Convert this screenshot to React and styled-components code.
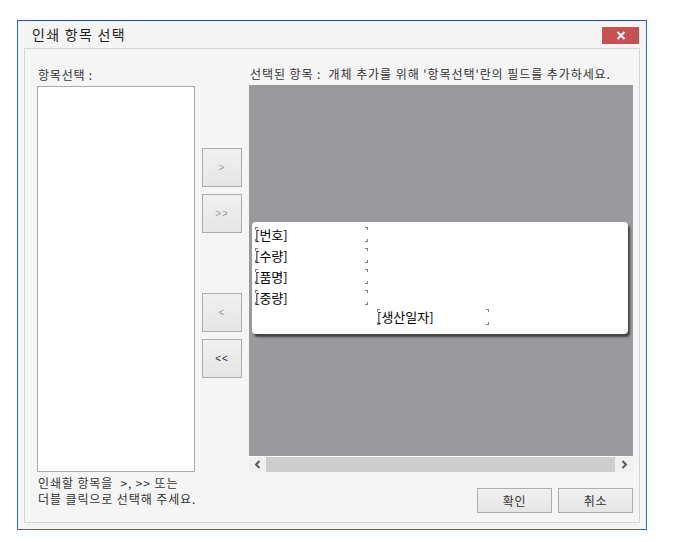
import React from "react";
import styled, { createGlobalStyle } from "styled-components";

const Global = createGlobalStyle`
  html, body { margin: 0; padding: 0; background: #ffffff; }
  body { font-family: "Noto Sans CJK KR", "Noto Sans", sans-serif; }
  * { box-sizing: border-box; }
`;

const Window = styled.div`
  margin: 20px 0 0 17px;
  width: 630px;
  height: 510px;
  border: 1px solid #1a72c6;
  border-top-color: #2a55a0;
  background: #f4f4f4;
  display: flex;
  flex-direction: column;
`;

const TitleBar = styled.div`
  height: 27px;
  display: flex;
  align-items: flex-start;
  justify-content: space-between;
  padding-left: 14px;
`;

const Title = styled.div`
  font-size: 14px;
  line-height: 16px;
  letter-spacing: 1.3px;
  margin-top: 5px;
  color: #1e1e1e;
`;

const CloseButton = styled.div`
  width: 37px;
  height: 17px;
  margin: 6px 7px 0 0;
  background: #c75050;
  display: flex;
  align-items: center;
  justify-content: center;
`;

const Panel = styled.div`
  margin: 0 6px;
  height: 475px;
  border: 1px solid #d4d4d4;
  background: #f5f5f5;
  display: grid;
  grid-template-columns: 158px 7px 40px 7px 384px;
  grid-template-rows: 37px 386px 50px;
  padding: 0 6px 0 12px;
`;

const Label = styled.div`
  align-self: end;
  font-size: 12px;
  line-height: 16px;
  letter-spacing: ${(p) => p.$ls || 0.8}px;
  margin-bottom: ${(p) => p.$mb || 3}px;
  margin-left: ${(p) => p.$ml || 0}px;
  color: #333333;
  white-space: pre;
  grid-column: ${(p) => p.$col};
`;

const ListBox = styled.div`
  grid-column: 1;
  grid-row: 2;
  background: #ffffff;
  border: 1px solid #ababab;
`;

const ButtonColumn = styled.div`
  grid-column: 3;
  grid-row: 2;
  display: flex;
  flex-direction: column;
  padding-top: 62px;
`;

const MoveButton = styled.div`
  width: 40px;
  height: 39px;
  margin-top: ${(p) => p.$mt || 0}px;
  border: 1px solid #adadad;
  background: linear-gradient(#f0f0f0, #e5e5e5);
  display: flex;
  align-items: center;
  justify-content: center;
  font-family: "Liberation Sans", sans-serif;
  font-size: 10px;
  letter-spacing: 1px;
  color: ${(p) => (p.$enabled ? "#2a2a3a" : "#9a9a9a")};
`;

const RightColumn = styled.div`
  grid-column: 5;
  grid-row: 2;
  margin-top: -1px;
  height: 387px;
  display: flex;
  flex-direction: column;
`;

const Canvas = styled.div`
  height: 371px;
  background: #9a9a9e;
  padding: 137px 0 0 3px;
`;

const Card = styled.div`
  width: 376px;
  height: 112px;
  background: #ffffff;
  border-radius: 4px;
  box-shadow: 2px 3px 2px rgba(40, 40, 40, 0.75);
  padding: 5px 3px 0 3px;
  display: flex;
  flex-direction: column;
  gap: 6px;
`;

const corner = "linear-gradient(#808080, #808080)";

const Field = styled.div`
  width: ${(p) => p.$w || 113}px;
  height: ${(p) => p.$h || 15}px;
  margin-left: ${(p) => p.$ml || 0}px;
  margin-top: ${(p) => p.$mt || 0}px;
  font-size: 13px;
  line-height: ${(p) => p.$h || 15}px;
  color: #000000;
  white-space: nowrap;
  background:
    ${corner} left top / 3px 1px no-repeat,
    ${corner} left top / 1px 3px no-repeat,
    ${corner} right top / 3px 1px no-repeat,
    ${corner} right top / 1px 3px no-repeat,
    ${corner} left bottom / 3px 1px no-repeat,
    ${corner} left bottom / 1px 3px no-repeat,
    ${corner} right bottom / 3px 1px no-repeat,
    ${corner} right bottom / 1px 3px no-repeat;
`;

const ScrollBar = styled.div`
  height: 16px;
  display: flex;
  border-top: 1px solid #ffffff;
  background: #f0f0f0;
`;

const ScrollArrow = styled.div`
  width: ${(p) => p.$w}px;
  display: flex;
  align-items: center;
  justify-content: center;
`;

const Thumb = styled.div`
  flex: 1;
  background: #cdcdcd;
`;

const Hint = styled.div`
  grid-column: 1 / span 3;
  grid-row: 3;
  padding-top: 3px;
  padding-left: 1px;
  font-size: 12px;
  line-height: 16px;
  letter-spacing: 0.9px;
  color: #333333;
  white-space: pre;
`;

const Footer = styled.div`
  grid-column: 5;
  grid-row: 3;
  display: flex;
  justify-content: flex-end;
  gap: 6px;
  padding-top: 16px;
`;

const DialogButton = styled.div`
  width: 75px;
  height: 25px;
  border: 1px solid #adadad;
  background: linear-gradient(#f0f0f0, #e5e5e5);
  display: flex;
  align-items: center;
  justify-content: center;
  font-size: 12px;
  letter-spacing: 0.8px;
  color: #333333;
`;

const Chevron = ({ dir }) => (
  <svg width="7" height="9" viewBox="0 0 7 9">
    <path
      d={dir === "left" ? "M5.5 1 L2 4.5 L5.5 8" : "M1.5 1 L5 4.5 L1.5 8"}
      fill="none"
      stroke="#5a5a5a"
      strokeWidth="2"
    />
  </svg>
);

const fields = ["[번호]", "[수량]", "[품명]", "[중량]"];

export default function App() {
  return (
    <>
      <Global />
      <Window>
        <TitleBar>
          <Title>인쇄 항목 선택</Title>
          <CloseButton>
            <svg width="10" height="9" viewBox="0 0 10 9">
              <path d="M1.5 1 L8.5 8 M8.5 1 L1.5 8" stroke="#ffffff" strokeWidth="2" />
            </svg>
          </CloseButton>
        </TitleBar>
        <Panel>
          <Label $col="1" $ml={1}>항목선택 :</Label>
          <Label $col="5" $ml={1} $mb={4} $ls={0.93}>{"선택된 항목 :  개체 추가를 위해 '항목선택'란의 필드를 추가하세요."}</Label>
          <ListBox />
          <ButtonColumn>
            <MoveButton>&gt;</MoveButton>
            <MoveButton $mt={7}>&gt;&gt;</MoveButton>
            <MoveButton $mt={60}>&lt;</MoveButton>
            <MoveButton $mt={7} $enabled>&lt;&lt;</MoveButton>
          </ButtonColumn>
          <RightColumn>
            <Canvas>
              <Card>
                {fields.map((f) => (
                  <Field key={f}>{f}</Field>
                ))}
                <Field $ml={122} $w={112} $h={16} $mt={-2}>[생산일자]</Field>
              </Card>
            </Canvas>
            <ScrollBar>
              <ScrollArrow $w={17}>
                <Chevron dir="left" />
              </ScrollArrow>
              <Thumb />
              <ScrollArrow $w={18}>
                <Chevron dir="right" />
              </ScrollArrow>
            </ScrollBar>
          </RightColumn>
          <Hint>{"인쇄할 항목을  >, >> 또는\n더블 클릭으로 선택해 주세요."}</Hint>
          <Footer>
            <DialogButton>확인</DialogButton>
            <DialogButton>취소</DialogButton>
          </Footer>
        </Panel>
      </Window>
    </>
  );
}
